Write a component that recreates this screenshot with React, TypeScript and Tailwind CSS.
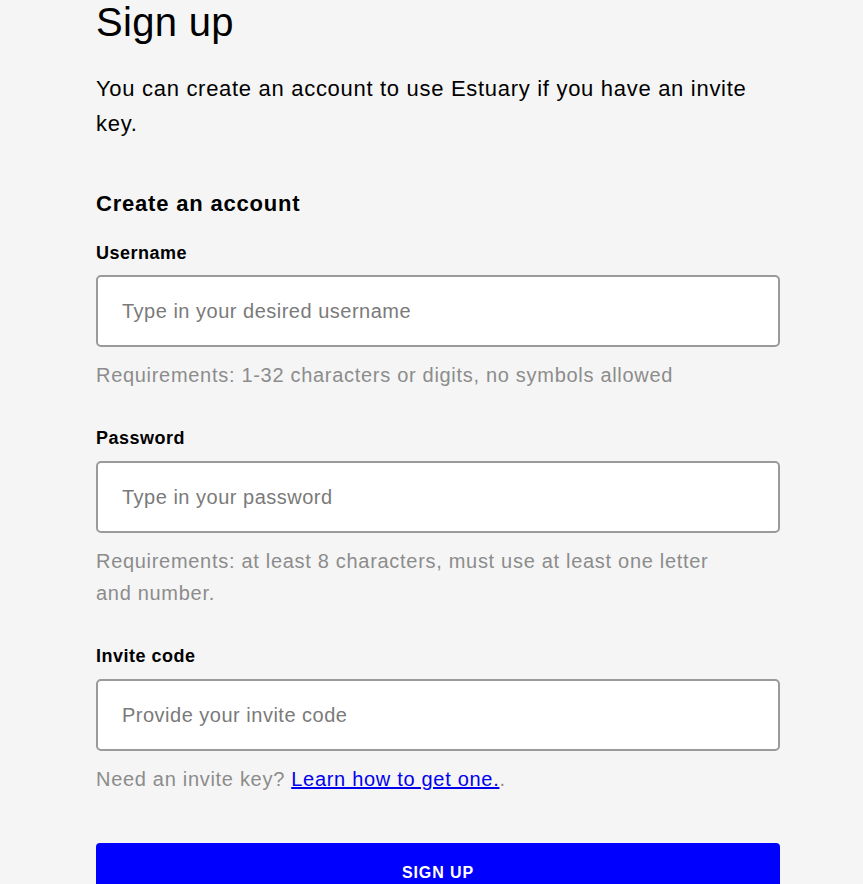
export default function App() {
  return (
    <div className="min-h-[884px] bg-[#f5f5f5] font-['Liberation_Sans',Arial,sans-serif] text-black">
      <div className="ml-[96px] w-[684px]">
        <h1 className="text-[40px] leading-[44px] tracking-[0.3px]">Sign up</h1>
        <p className="mt-[27px] text-[22px] leading-[35.2px] tracking-[0.7px]">
          You can create an account to use Estuary if you have an invite key.
        </p>

        <h2 className="mt-[45px] text-[22px] font-bold leading-[35.2px] tracking-[0.8px]">
          Create an account
        </h2>

        <Field label="Username" placeholder="Type in your desired username" className="mt-[17px]" />
        <p className="mt-[12px] text-[20px] leading-[32px] tracking-[0.7px] text-[#8c8c8c]">
          Requirements: 1-32 characters or digits, no symbols allowed
        </p>

        <Field label="Password" placeholder="Type in your password" type="password" className="mt-[33px]" />
        <p className="mt-[12px] max-w-[625px] text-[20px] leading-[32px] tracking-[0.7px] text-[#8c8c8c]">
          Requirements: at least 8 characters, must use at least one letter and number.
        </p>

        <Field label="Invite code" placeholder="Provide your invite code" className="mt-[33px]" />
        <p className="mt-[12px] text-[20px] leading-[32px] tracking-[0.7px] text-[#8c8c8c]">
          Need an invite key?{" "}
          <a href="#" className="text-[#0000ee] underline">
            Learn how to get one.
          </a>
          .
        </p>

        <button className="mt-[48px] h-[60px] w-full rounded-[4px] bg-[#0000ff] text-[16px] font-bold uppercase tracking-[0.9px] text-white">
          Sign up
        </button>
      </div>
    </div>
  );
}

function Field({
  label,
  placeholder,
  type = "text",
  className = "",
}: {
  label: string;
  placeholder: string;
  type?: string;
  className?: string;
}) {
  return (
    <div className={className}>
      <label className="block text-[18px] font-bold leading-[28.8px] tracking-[0.5px]">{label}</label>
      <input
        type={type}
        placeholder={placeholder}
        className="mt-[8px] block h-[72px] w-full rounded-[5px] border-2 border-[#9a9a9a] bg-white px-[24px] text-[20px] tracking-[0.5px] text-black placeholder:text-[#7a7a7a] outline-none"
      />
    </div>
  );
}
